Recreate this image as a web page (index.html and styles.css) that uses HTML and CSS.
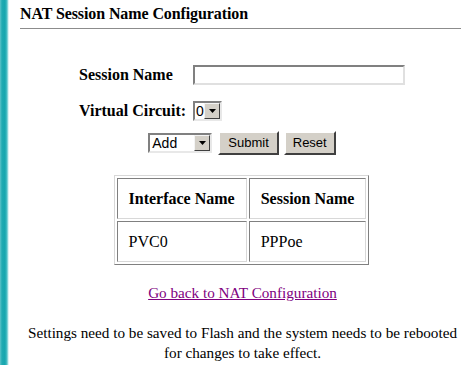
FILE: index.html
```html
<!DOCTYPE html>
<html>
<head>
<meta charset="utf-8">
<link rel="stylesheet" href="styles.css">
</head>
<body>
<div class="page">
  <div class="title">NAT Session Name Configuration</div>
  <div class="rule"></div>
  <div class="form">
    <div class="label">Session Name</div>
    <div class="field"><span class="textbox"></span></div>
    <div class="label">Virtual Circuit:</div>
    <div class="field"><span class="select small"><span class="val">0</span><span class="arrow"><svg width="7" height="4" viewBox="0 0 7 4"><path d="M0 0H7L3.5 4Z" fill="#000"/></svg></span></span></div>
  </div>
  <div class="actions">
    <span class="select wide"><span class="val">Add</span><span class="arrow"><svg width="7" height="4" viewBox="0 0 7 4"><path d="M0 0H7L3.5 4Z" fill="#000"/></svg></span></span>
    <span class="btn">Submit</span>
    <span class="btn">Reset</span>
  </div>
  <div class="tablewrap">
    <table class="grid">
      <tr><th>Interface Name</th><th>Session Name</th></tr>
      <tr><td>PVC0</td><td>PPPoe</td></tr>
    </table>
  </div>
  <div class="back"><a href="#">Go back to NAT Configuration</a></div>
  <p class="note">Settings need to be saved to Flash and the system needs to be rebooted for changes to take effect.</p>
</div>
</body>
</html>
```
FILE: styles.css
```css
html, body { margin: 0; padding: 0; background: #fff; }
body {
  font-family: "Liberation Serif", "Times New Roman", serif;
  font-size: 16px;
  color: #000;
  background-image: linear-gradient(to right, #5cc3c8 0, #20aab2 2px, #16a6ae 5px, #4fc0c6 7px, #b8e6e8 8px, #fff 9px);
  background-size: 9px 100%;
  background-repeat: no-repeat;
  min-height: 365px;
}
.page { padding: 4px 8px 0 20px; }
.title { font-weight: bold; font-size: 16px; line-height: 20px; letter-spacing: -0.1px; }
.rule { height: 1px; background: #8c8c8c; margin-top: 4px; }
.form {
  display: grid;
  grid-template-columns: 114px 212px;
  justify-content: center;
  row-gap: 16px;
  margin-top: 36px;
  padding-left: 3px;
  align-items: center;
}
.label { font-weight: bold; font-size: 16px; }
.textbox {
  display: block; width: 212px; height: 20px; box-sizing: border-box;
  border-style: solid; border-width: 2px;
  border-color: #808080 #e0e0e0 #e0e0e0 #808080;
  background: #fff;
}
.select {
  display: inline-flex; box-sizing: border-box; height: 20px;
  border-style: solid; border-width: 2px;
  border-color: #808080 #e8e8e8 #e8e8e8 #808080;
  background: #fff;
  font-family: "Liberation Sans", Arial, sans-serif; font-size: 14px;
  align-items: stretch;
}
.select .val { flex: 1; padding-left: 2px; line-height: 16px; }
.select .arrow {
  width: 16px; box-sizing: border-box; background: #d4d0c8;
  border-style: solid; border-width: 1px;
  border-color: #f4f4f4 #404040 #404040 #f4f4f4;
  display: flex; align-items: center; justify-content: center;
}
.select.small { width: 29px; }
.select.small .val { padding-left: 1px; }
.select.wide { width: 64px; }
.actions {
  display: flex; justify-content: center; align-items: center;
  margin-top: 10px; padding-left: 3px;
}
.actions .btn { margin-left: 5px; }
.actions .select + .btn { margin-left: 6px; }
.btn {
  display: inline-block; box-sizing: border-box; height: 24px;
  padding: 0 8px 0 8px; line-height: 20px;
  font-family: "Liberation Sans", Arial, sans-serif; font-size: 13px;
  background: #d4d0c8;
  border-style: solid; border-width: 2px;
  border-color: #fff #404040 #404040 #fff;
}
.btn + .btn { padding: 0 7px; }
.tablewrap { display: flex; justify-content: center; margin-top: 20px; padding-left: 2px; }
.grid {
  border-collapse: separate; border-spacing: 2px;
  border-style: solid; border-width: 1px;
  border-color: #d8d8d8 #808080 #808080 #d8d8d8;
}
.grid th, .grid td {
  border-style: solid; border-width: 1px;
  border-color: #808080 #d8d8d8 #d8d8d8 #808080;
  text-align: left; padding: 0 11px; height: 39px;
  font-size: 16px;
}
.grid td { font-weight: normal; }
.back { text-align: center; margin-top: 19px; font-size: 15.2px; padding-left: 4px; }
.back a { color: #800080; text-decoration: underline; }
.note { text-align: center; margin: 21px 0 0; line-height: 20px; font-size: 15.2px; padding-left: 4px; }
```
